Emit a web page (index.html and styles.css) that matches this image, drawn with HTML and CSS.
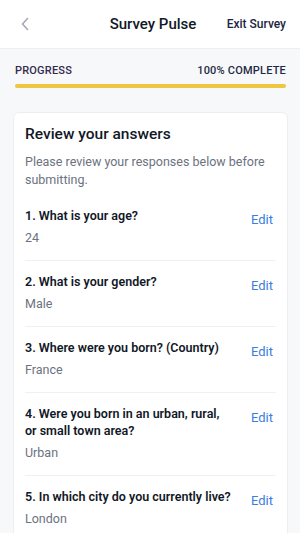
FILE: index.html
```html
<!DOCTYPE html>
<html>
<head>
  <meta charset="utf-8">
  <title>Survey Pulse</title>
  <link rel="stylesheet" href="styles.css">
</head>
<body>

  <div class="topbar">
    <button class="back-button" aria-label="Back">
      <svg width="10" height="14" viewBox="0 0 10 14"><path d="M7.5 1.5 L2.5 7 L7.5 12.5" fill="none" stroke="#a3a8b3" stroke-width="1.6" stroke-linecap="round" stroke-linejoin="round"/></svg>
    </button>
    <div class="topbar-title">Survey Pulse</div>
    <button class="exit-button">Exit Survey</button>
  </div>

  <div class="progress">
    <div class="progress-labels">
      <span class="progress-name">PROGRESS</span>
      <span class="progress-value">100% COMPLETE</span>
    </div>
    <div class="progress-track">
      <div class="progress-fill" style="width: 100%;"></div>
    </div>
  </div>

  <div class="card">
    <h2 class="card-title">Review your answers</h2>
    <p class="card-desc">Please review your responses below before submitting.</p>

    <div class="answer">
      <div class="answer-body">
        <div class="question">1. What is your age?</div>
        <div class="reply">24</div>
      </div>
      <button class="edit">Edit</button>
    </div>

    <div class="answer">
      <div class="answer-body">
        <div class="question">2. What is your gender?</div>
        <div class="reply">Male</div>
      </div>
      <button class="edit">Edit</button>
    </div>

    <div class="answer">
      <div class="answer-body">
        <div class="question">3. Where were you born? (Country)</div>
        <div class="reply">France</div>
      </div>
      <button class="edit">Edit</button>
    </div>

    <div class="answer">
      <div class="answer-body">
        <div class="question">4. Were you born in an urban, rural, or small town area?</div>
        <div class="reply">Urban</div>
      </div>
      <button class="edit">Edit</button>
    </div>

    <div class="answer">
      <div class="answer-body">
        <div class="question">5. In which city do you currently live?</div>
        <div class="reply">London</div>
      </div>
      <button class="edit">Edit</button>
    </div>
  </div>

</body>
</html>
```

FILE: styles.css
```css
body {
  margin: 0;
  font-family: Roboto, "Noto Sans", sans-serif;
  background: #f7f8fa;
  color: #111827;
}

button {
  font-family: inherit;
  background: none;
  border: 0;
  padding: 0;
  cursor: pointer;
}

.topbar {
  height: 48px;
  background: white;
  border-bottom: 1px solid #eceef2;
  display: grid;
  grid-template-columns: 1fr auto 1fr;
  align-items: center;
  padding: 0 14px 0 20px;
}

.back-button {
  justify-self: start;
  display: flex;
  align-items: center;
}

.topbar-title {
  font-size: 15px;
  font-weight: 500;
  color: #111827;
}

.exit-button {
  justify-self: end;
  font-size: 12px;
  font-weight: 500;
  color: #1c2540;
}

.progress {
  padding: 15px 14px 0 15px;
}

.progress-labels {
  display: flex;
  justify-content: space-between;
  font-size: 11px;
  font-weight: 500;
  line-height: 14px;
  letter-spacing: 0.2px;
  color: #1f2a44;
}

.progress-name {
  color: #342c4c;
}

.progress-track {
  margin-top: 6px;
  height: 4px;
  border-radius: 2px;
  background: #eceef2;
}

.progress-fill {
  height: 4px;
  border-radius: 2px;
  background: #efc63f;
}

.card {
  margin: 24px 12px 0 13px;
  background: white;
  border: 1px solid #eceef2;
  border-radius: 6px;
  padding: 11px 11px 0 11px;
}

.card-title {
  margin: 0;
  font-size: 15.5px;
  font-weight: 500;
  line-height: 20px;
  color: #111827;
}

.card-desc {
  margin: 9px 0 6px;
  font-size: 12.5px;
  line-height: 18px;
  color: #6b7280;
}

.answer {
  display: flex;
  align-items: flex-start;
  gap: 20px;
  padding: 12px 0 14px;
  border-top: 1px solid #eef0f3;
}

.card-desc + .answer {
  border-top: 0;
}

.answer-body {
  flex: 1;
}

.question {
  font-size: 12.5px;
  font-weight: 600;
  line-height: 17px;
  color: #111827;
}

.reply {
  margin-top: 5px;
  font-size: 12.5px;
  line-height: 17px;
  color: #6b7280;
}

.edit {
  margin-top: 4px;
  margin-right: 3px;
  font-size: 13px;
  line-height: 17px;
  color: #3b7ddd;
}
```
